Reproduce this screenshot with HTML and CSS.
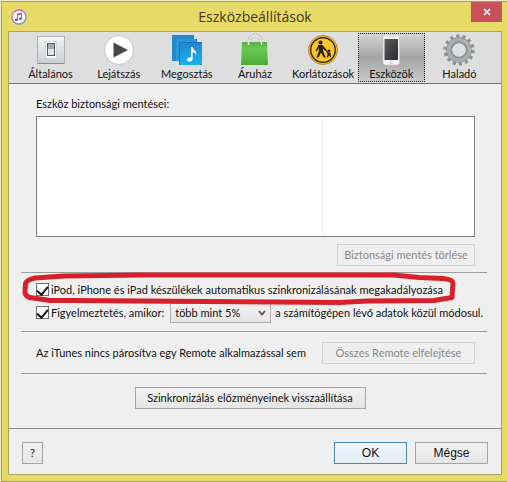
FILE: index.html
```
<!DOCTYPE html>
<html lang="hu">
<head>
    <meta charset="utf-8">
    <title>Eszközbeállítások</title>
    <link rel="stylesheet" href="styles.css">
</head>
<body>
<div class="window">
    <header class="titlebar">
        <svg class="app-icon" viewBox="0 0 16 16">
            <defs>
                <linearGradient id="ring" x1="0" y1="0" x2="1" y2="1">
                    <stop offset="0" stop-color="#e2569c"/>
                    <stop offset="0.5" stop-color="#a07bd6"/>
                    <stop offset="1" stop-color="#3fa3e6"/>
                </linearGradient>
                <linearGradient id="note" x1="0" y1="0" x2="0" y2="1">
                    <stop offset="0" stop-color="#e8479a"/>
                    <stop offset="1" stop-color="#5a62d8"/>
                </linearGradient>
            </defs>
            <circle cx="8" cy="8" r="7" fill="#fff" stroke="url(#ring)" stroke-width="1.3"/>
            <path d="M6 4.6 11 3.6V9.6a1.6 1.3 0 1 1-1-1.1V5.7L7 6.3v4.4a1.6 1.3 0 1 1-1-1.1z" fill="url(#note)"/>
        </svg>
        <h1>Eszközbeállítások</h1>
        <button class="close" aria-label="Bezárás">
            <svg viewBox="0 0 8 8"><path d="M1 1 7 7M7 1 1 7" stroke="#fff" stroke-width="1.6"/></svg>
        </button>
    </header>

    <main class="client">
        <nav class="toolbar">
            <button class="tab">
                <svg viewBox="0 0 32 32">
                    <defs><linearGradient id="plate" x1="0" y1="0" x2="0" y2="1"><stop offset="0" stop-color="#f2f5f6"/><stop offset="1" stop-color="#c9d0d4"/></linearGradient></defs>
                    <rect x="2.5" y="2.5" width="27" height="27" fill="url(#plate)" stroke="#aab1b5"/>
                    <path d="M3 29.5H29" stroke="#858c90"/>
                    <rect x="10.5" y="7.5" width="11" height="17" fill="#fafafa" stroke="#d2d6d8"/>
                    <rect x="12.5" y="9.5" width="7" height="12" fill="#e4e6e7" stroke="#555"/>
                    <path d="M13 10h6v5h-6z" fill="#aaa"/>
                </svg>
                <span>Általános</span>
            </button>
            <button class="tab">
                <svg viewBox="0 0 32 32">
                    <circle cx="16" cy="16" r="14.5" fill="#fff" stroke="#c2c2c2"/>
                    <path d="M10.5 8.5 25 16 10.5 23.5z" fill="#484848"/>
                </svg>
                <span>Lejátszás</span>
            </button>
            <button class="tab">
                <svg viewBox="0 0 32 32">
                    <defs><linearGradient id="blue" x1="0" y1="0" x2="0" y2="1"><stop offset="0" stop-color="#2385d0"/><stop offset="1" stop-color="#19b1ee"/></linearGradient></defs>
                    <path d="M1 1h22v26H1z" fill="#2389cf"/>
                    <path d="M5 5h21v22H5z" fill="#1b79bd"/>
                    <path d="M5 5h20v22H5z" fill="#2a98dc"/>
                    <path d="M8 8h23v23H8z" fill="#1974b6"/>
                    <path d="M9 9h22v22H9z" fill="url(#blue)"/>
                    <path d="M20 13h1.6c0 3 4.4 3 3.6 8-.6-2-1.8-2.6-3.6-2.8v6.5c0 3.6-5.6 3.8-5.6 1 0-2 2.2-2.9 4-2.4z" fill="#fff"/>
                </svg>
                <span>Megosztás</span>
            </button>
            <button class="tab">
                <svg viewBox="0 0 32 32">
                    <defs><linearGradient id="bag" x1="0" y1="0" x2="0" y2="1"><stop offset="0" stop-color="#50ad40"/><stop offset=".3" stop-color="#6cc951"/><stop offset="1" stop-color="#49ab37"/></linearGradient></defs>
                    <path d="M10 11V7.5a6 6 0 0 1 12 0V11" fill="none" stroke="#aaa" stroke-width="2.6"/>
                    <path d="M10 11V7.5a6 6 0 0 1 12 0V11" fill="none" stroke="#f6f6f6" stroke-width="1.4"/>
                    <path d="M3 8h25l1 23H2z" fill="url(#bag)"/>
                    <path d="M9.5 8v3M22.5 8v3" stroke="#e7f5e2" stroke-width="1.5"/>
                </svg>
                <span>Áruház</span>
            </button>
            <button class="tab">
                <svg viewBox="0 0 32 32">
                    <circle cx="16" cy="16" r="14.5" fill="#e9bd35" stroke="#bb8c22"/>
                    <circle cx="16" cy="16" r="12.3" fill="#f8c52c" stroke="#3b2905" stroke-width="1.4"/>
                    <circle cx="13.5" cy="8.5" r="2" fill="#2b1d04"/>
                    <path d="M11.5 11h4l5.5 6.5-.8.8-4.2-3.6.4 3.3 2.4 5.5h-2l-2.8-5-2.5 5h-2l2.3-6v-3.5l-2.3 3.5-1-.5z" fill="#2b1d04"/>
                    <circle cx="22" cy="17" r="1.4" fill="#2b1d04"/>
                    <path d="m19.5 18 2.5.6 2 .6-.6 1.5.9 2.5h-1.2l-1-1.7-1.3 1.7h-1.2l1-3z" fill="#2b1d04"/>
                </svg>
                <span>Korlátozások</span>
            </button>
            <button class="tab selected">
                <svg viewBox="0 0 32 32">
                    <defs><linearGradient id="screen" x1="0" y1="0" x2="1" y2="1"><stop offset="0" stop-color="#595c60"/><stop offset="1" stop-color="#292b2e"/></linearGradient></defs>
                    <rect x="8" y="1" width="16.5" height="30" rx="2.5" fill="#f8f8f8" stroke="#c5c5c5" stroke-width=".8"/>
                    <rect x="9.5" y="5" width="13.5" height="21" fill="url(#screen)"/>
                    <path d="M14 3h5" stroke="#ccc"/>
                    <circle cx="16.2" cy="28.5" r="1.3" fill="#fff" stroke="#aaa" stroke-width=".7"/>
                </svg>
                <span>Eszközök</span>
            </button>
            <button class="tab">
                <svg viewBox="0 0 32 32">
                    <circle cx="16" cy="16" r="13.4" fill="none" stroke="#8b9093" stroke-width="4.4" stroke-dasharray="3 3.013"/>
                    <circle cx="16" cy="16" r="9.8" fill="none" stroke="#83888c" stroke-width="6"/>
                    <circle cx="16" cy="16" r="10" fill="none" stroke="#a8adb0" stroke-width="4.4"/>
                    <circle cx="16" cy="16" r="6.4" fill="#dedede"/>
                    <circle cx="16" cy="16" r="8.2" fill="none" stroke="#8d9295"/>
                </svg>
                <span>Haladó</span>
            </button>
        </nav>

        <section class="backups">
            <p id="backup-label">Eszköz biztonsági mentései:</p>
            <div class="list" role="listbox" tabindex="0" aria-labelledby="backup-label">
                <div class="col-name"></div>
                <div class="col-date"></div>
            </div>
            <button class="btn wide-138" disabled>Biztonsági mentés törlése</button>
        </section>

        <section class="sync">
            <div class="row marked">
                <input type="checkbox" id="prevent" checked>
                <label for="prevent">iPod, iPhone és iPad készülékek automatikus szinkronizálásának megakadályozása</label>
                <svg class="marker" viewBox="0 0 434 36">
                    <path d="M42 5 13 7Q4 9 3.5 13L3 21Q3 25 8 26.5L28 29.5H50L318 31.5 345 30 412 29.5 430 26.5 431 12Q431 8.5 421 7.5L397 6.5 372 4H120L42 5Z" fill="none" stroke="#d8202b" stroke-width="5" stroke-linejoin="round"/>
                </svg>
            </div>
            <div class="row">
                <input type="checkbox" id="warn" checked>
                <label for="warn">Figyelmeztetés, amikor:</label>
                <select id="limit" aria-label="Módosult adatok aránya">
                    <option>több mint 5%</option>
                    <option>több mint 25%</option>
                    <option>több mint 50%</option>
                </select>
                <label for="limit">a számítógépen lévő adatok közül módosul.</label>
            </div>
        </section>

        <section class="remote">
            <p>Az iTunes nincs párosítva egy Remote alkalmazással sem</p>
            <button class="btn wide-153" disabled>Összes Remote elfelejtése</button>
        </section>

        <section class="reset">
            <button class="btn wide-231">Szinkronizálás előzményeinek visszaállítása</button>
        </section>

        <footer class="footer">
            <button class="btn help" aria-label="Súgó">?</button>
            <button class="btn ok">OK</button>
            <button class="btn cancel">Mégse</button>
        </footer>
    </main>
</div>
</body>
</html>
```
FILE: styles.css
```
* {
    margin: 0;
    padding: 0;
    box-sizing: border-box;
}

body {
    min-height: 100vh;
    padding: 1px 0 0 1px;
    display: flex;
    background: #eeeccb;
    color: #111;
    font-family: Lato, Tahoma, sans-serif;
    font-size: 11px;
    line-height: 14px;
}

button, input, select {
    font: inherit;
    color: inherit;
}

.window {
    flex: 1;
    min-width: 0;
    display: flex;
    flex-direction: column;
    padding: 0 5px 6px 6px;
    background: #e8da66;
    border: 1px solid #aaa24f;
    border-right: 0;
}

/* title bar */
.titlebar {
    display: flex;
    align-items: center;
    height: 29px;
    padding-left: 3px;
}

.titlebar h1 {
    flex: 1;
    padding-left: 12px;
    text-align: center;
    font-family: "Open Sans", "Noto Sans", sans-serif;
    font-size: 14px;
    font-weight: 400;
    line-height: 20px;
    color: #40391a;
}

.app-icon {
    width: 16px;
    height: 16px;
}

.close {
    align-self: flex-start;
    width: 31px;
    height: 20px;
    border: 0;
    background: #c9505a;
}

.close svg {
    width: 8px;
    height: 8px;
}

.client {
    flex: 1;
    display: flex;
    flex-direction: column;
    background: #efefef;
    border: 1px solid #aca35c;
}

/* toolbar */
.toolbar {
    display: flex;
    justify-content: space-between;
    padding: 1px 8px;
    height: 52px;
    background: #dedede;
    border-bottom: 1px solid #707070;
}

.tab {
    flex: 0 0 67px;
    display: flex;
    flex-direction: column;
    align-items: center;
    justify-content: space-between;
    border: 1px solid transparent;
    background: none;
    white-space: nowrap;
}

.tab svg {
    width: 32px;
    height: 32px;
    flex: none;
}

.tab.selected {
    border: 1px dotted #222;
    background: linear-gradient(#d4d4d4, #a4a4a4 50%, #c9c9c9);
}

/* content */
.backups {
    display: flex;
    flex-direction: column;
    padding: 13px 26px 6px 27px;
}

.list {
    display: flex;
    height: 121px;
    margin: 5px 0 7px;
    background: #fff;
    border: 1px solid #7d7d7d;
}

.col-name {
    flex: 286;
    border-right: 1px solid #ececec;
}

.col-date {
    flex: 151;
}

.btn {
    height: 22px;
    border: 1px solid #a5a5a5;
    background: linear-gradient(#f1f1f1, #e5e5e5);
    white-space: nowrap;
}

.btn:disabled {
    border-color: #d2d2d2;
    background: #efefef;
    color: #888;
}

.backups .btn {
    align-self: flex-end;
}

.wide-138 {
    width: 138px;
}

.wide-153 {
    width: 153px;
}

.wide-231 {
    width: 231px;
}

.sync, .remote, .reset {
    margin: 0 14px 0 12px;
    border-top: 1px solid #9c9c9c;
}

.sync {
    padding: 5px 0 7px 15px;
}

.row {
    display: flex;
    align-items: center;
    height: 23px;
    white-space: nowrap;
}

.row input {
    appearance: none;
    flex: none;
    display: flex;
    align-items: flex-start;
    justify-content: center;
    width: 13px;
    height: 13px;
    margin-right: 2px;
    border: 1px solid #707070;
    background: #fff;
}

.row input:checked::before {
    content: "";
    width: 5px;
    height: 9px;
    border: solid #111;
    border-width: 0 2px 2px 0;
    transform: rotate(40deg);
}

.row select {
    appearance: none;
    flex: none;
    width: 101px;
    height: 20px;
    margin: 0 4px 0 6px;
    padding-left: 4px;
    border: 1px solid #adadad;
    background: url("data:image/svg+xml,%3Csvg xmlns='http://www.w3.org/2000/svg' viewBox='0 0 8 6'%3E%3Cpath d='M1 1l3 3.5 3-3.5' fill='none' stroke='%23555' stroke-width='1.8'/%3E%3C/svg%3E") no-repeat right 4px center / 8px 6px, linear-gradient(#f1f1f1, #e5e5e5);
}

/* hand-drawn marker lies over the first row */
.marked {
    position: relative;
}

.marker {
    position: absolute;
    left: -14px;
    top: -7px;
    width: 434px;
    height: 36px;
    pointer-events: none;
}

.remote {
    display: flex;
    align-items: center;
    justify-content: space-between;
    height: 42px;
    padding: 0 12px 0 15px;
    white-space: nowrap;
}

.reset {
    padding: 13px 8px 0 0;
    text-align: center;
}

.footer {
    display: flex;
    gap: 8px;
    margin-top: auto;
    padding: 13px 13px 10px 13px;
    border-top: 1px solid #8c8c8c;
}

.help {
    width: 21px;
    margin-right: auto;
}

.ok, .cancel {
    width: 73px;
    font-family: "Liberation Sans", Arial, sans-serif;
    font-size: 12px;
}

.ok {
    border-color: #4387bd;
    background: linear-gradient(#f0f5f9, #e2edf5);
}
```
